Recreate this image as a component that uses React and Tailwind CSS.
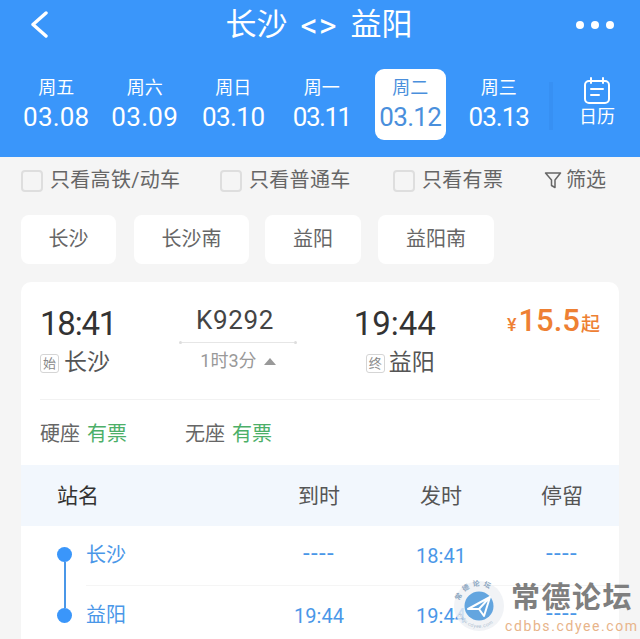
import React from "react";

const days = [
  ["周五", "03.08", false, "tracking-[0.2px]"],
  ["周六", "03.09", false, "tracking-[0.3px]"],
  ["周日", "03.10", false, "-tracking-[0.6px]"],
  ["周一", "03.11", false, "-tracking-[1.5px]"],
  ["周二", "03.12", true, "-tracking-[0.7px]"],
  ["周三", "03.13", false, "-tracking-[1px]"],
];

function Check({ label, className }) {
  return (
    <div className={`flex items-center gap-[7px] ${className}`}>
      <span className="w-[22px] h-[22px] rounded-[4px] border-2 border-[#dedede] bg-[#f5f5f5]" />
      <span className="text-[20px] leading-[24px] tracking-[0.3px] text-[#666666] -mt-[3px]">{label}</span>
    </div>
  );
}

function Chip({ w, label }) {
  return (
    <div className={`h-[49px] ${w} bg-white rounded-[8px] flex items-center justify-center pb-[2px] text-[20px] text-[#666666]`}>
      {label}
    </div>
  );
}

function Dash() {
  return <span className="text-[24px] leading-[24px] tracking-[1.4px] relative -top-[2px]">----</span>;
}

function Row({ name, arr, dep, stop, border }) {
  return (
    <div className={`flex items-center h-[60px] text-[#4a97e8] text-[20px] ${border ? "border-b border-[#f5f5f5]" : ""}`}>
      <div className="w-[183px] -mt-[2px]">{name}</div>
      <div className="w-[100px] text-center">{arr}</div>
      <div className="w-[100px] ml-[22px] text-center">{dep}</div>
      <div className="w-[100px] ml-[21px] text-center">{stop}</div>
    </div>
  );
}

export default function App() {
  return (
    <div className="relative w-[640px] h-[639px] overflow-hidden bg-[#f5f5f5] font-['Roboto','Noto_Sans_CJK_SC',sans-serif]">
      {/* blue header */}
      <div className="h-[157px] bg-[#3a96fa] text-white">
        <div className="h-[50px] flex items-center justify-between pl-[30px] pr-[26px]">
          <svg width="18" height="28" viewBox="0 0 18 28" fill="none" stroke="white" strokeWidth="3.4" strokeLinecap="round" strokeLinejoin="round">
            <path d="M16 2 L3 13.5 L16 25" />
          </svg>
          <div className="flex items-center gap-[13px] text-[31px] leading-[36px] ml-[14px]">
            <span>长沙</span>
            <span className="tracking-[1px] text-[34px]">&lt;&gt;</span>
            <span>益阳</span>
          </div>
          <div className="flex gap-[7px]">
            <span className="w-[8px] h-[8px] rounded-full bg-white" />
            <span className="w-[8px] h-[8px] rounded-full bg-white" />
            <span className="w-[8px] h-[8px] rounded-full bg-white" />
          </div>
        </div>
        <div className="flex items-start pl-[12px] pt-[19px]">
          {days.map(([d, n, active, track]) => (
            <div key={n} className="w-[88.5px] flex justify-center">
              <div className={`w-[71px] h-[71px] rounded-[9px] flex flex-col items-center pt-[7px] ${active ? "bg-white text-[#4a8fdc]" : ""}`}>
                <div className="text-[18px] leading-[24px]">{d}</div>
                <div className={`text-[26px] leading-[30px] mt-[2px] whitespace-nowrap ${track}`}>{n}</div>
              </div>
            </div>
          ))}
          <div className="w-[4px] h-[48px] mt-[13px] ml-[6px] bg-[#3790f3]" />
          <div className="flex flex-col items-center ml-[26px] pt-[8px]">
            <svg width="28" height="27" viewBox="0 0 28 27" fill="none" stroke="white" strokeWidth="2" strokeLinecap="round">
              <rect x="2" y="4" width="24" height="22" rx="4" />
              <path d="M8 1v5M20 1v5M8 12h12M8 18h8" />
            </svg>
            <div className="text-[18px] leading-[24px] mt-[1px]">日历</div>
          </div>
        </div>
      </div>

      {/* filters */}
      <div className="flex items-center h-[47px] pl-[21px] pt-[1px]">
        <Check label="只看高铁/动车" className="w-[199px]" />
        <Check label="只看普通车" className="w-[173px]" />
        <Check label="只看有票" className="w-[151px]" />
        <div className="flex items-center gap-[4px] text-[20px] text-[#666666] -mt-[3px]">
          <svg width="18" height="18" viewBox="0 0 18 18" fill="none" stroke="#666666" strokeWidth="1.5" strokeLinejoin="round">
            <path d="M1.5 2h15L11 9v7.5L7.5 14.5V9z" />
          </svg>
          <span>筛选</span>
        </div>
      </div>

      {/* chips */}
      <div className="flex mt-[11px] pl-[21px]">
        <Chip w="w-[95px]" label="长沙" />
        <Chip w="w-[115px] ml-[18px]" label="长沙南" />
        <Chip w="w-[96px] ml-[16px]" label="益阳" />
        <Chip w="w-[116px] ml-[17px]" label="益阳南" />
      </div>

      {/* card */}
      <div className="mt-[18px] mx-[21px] w-[598px] bg-white rounded-t-[10px]">
        <div className="mx-[19px] h-[118px] border-b border-[#f2f2f2] flex">
          <div className="w-[140px] pt-[22px]">
            <div className="text-[33px] leading-[40px] text-[#333333] whitespace-nowrap -tracking-[1.2px]">18:41</div>
            <div className="flex items-center gap-[5px] mt-[3px]">
              <span className="w-[19px] h-[19px] border border-[#d5d5d5] rounded-[3px] text-[13px] leading-[17px] text-center text-[#888888]">始</span>
              <span className="text-[23px] leading-[32px] text-[#555555]">长沙</span>
            </div>
          </div>
          <div className="w-[118px] pt-[20px] flex flex-col items-center">
            <div className="text-[26px] leading-[36px] text-[#444444] tracking-[0.6px] -ml-[6px]">K9292</div>
            <div className="w-full flex items-center mt-[3px]">
              <span className="w-[3px] h-[3px] rounded-full bg-[#dddddd]" />
              <span className="flex-1 h-[1px] bg-[#e6e6e6]" />
              <span className="w-[3px] h-[3px] rounded-full bg-[#dddddd]" />
            </div>
            <div className="flex items-center gap-[7px] mt-[5px] text-[18px] leading-[24px] text-[#999999]">
              <span>1时3分</span>
              <span className="w-0 h-0 border-x-[6px] border-x-transparent border-b-[7px] border-b-[#999999]" />
            </div>
          </div>
          <div className="w-[139px] ml-[58px] pt-[22px]">
            <div className="text-[33px] leading-[40px] text-[#333333] whitespace-nowrap -ml-[1px]">19:44</div>
            <div className="flex items-center gap-[4px] mt-[3px] ml-[11px]">
              <span className="w-[19px] h-[19px] border border-[#d5d5d5] rounded-[3px] text-[13px] leading-[17px] text-center text-[#888888]">终</span>
              <span className="text-[23px] leading-[32px] text-[#555555]">益阳</span>
            </div>
          </div>
          <div className="ml-[14px] pt-[20px] flex items-baseline text-[#ee8033] font-medium whitespace-nowrap">
            <span className="text-[18px] mr-[2px]">¥</span>
            <span className="text-[31px] leading-[38px]">15.5</span>
            <span className="text-[19px] ml-[1px]">起</span>
          </div>
        </div>

        <div className="h-[65px] pl-[19px] pt-[2px] flex items-center text-[20px] text-[#666666]">
          <span>硬座</span>
          <span className="ml-[7px] text-[#4caf68]">有票</span>
          <span className="ml-[58px]">无座</span>
          <span className="ml-[7px] text-[#4caf68]">有票</span>
        </div>

        <div className="h-[61px] bg-[#f2f7fd] flex items-center pt-[3px] text-[21px] text-[#555555]">
          <div className="w-[248px] pl-[36px] text-[#333333]">站名</div>
          <div className="w-[100px] text-center">到时</div>
          <div className="w-[100px] ml-[22px] text-center">发时</div>
          <div className="w-[100px] ml-[21px] text-center">停留</div>
        </div>

        <div className="flex pl-[36px]">
          <div className="w-[29px] flex flex-col items-start pt-[21px]">
            <span className="w-[15px] h-[15px] rounded-full bg-[#3a96fa]" />
            <span className="w-[2px] h-[46px] ml-[6.5px] bg-[#4a97e8]" />
            <span className="w-[15px] h-[15px] rounded-full bg-[#3a96fa]" />
          </div>
          <div className="flex-1">
            <Row name="长沙" arr={<Dash />} dep="18:41" stop={<Dash />} border />
            <Row name="益阳" arr="19:44" dep="19:44" stop={<Dash />} />
          </div>
        </div>
      </div>

      {/* watermark */}
      <div className="absolute left-[453px] top-[580px] flex pointer-events-none">
        <svg width="52" height="52" viewBox="0 0 52 52" className="opacity-80">
          <defs>
            <path id="ringTop" d="M6 26 A20 20 0 0 1 46 26" />
            <path id="ringBottom" d="M4 26 A22 22 0 0 0 48 26" />
          </defs>
          <circle cx="26" cy="26" r="25" fill="#eef1f5" />
          <text fontSize="7" fontWeight="700" fill="#6f8fb0" letterSpacing="3">
            <textPath href="#ringTop" startOffset="8%">常德论坛</textPath>
          </text>
          <text fontSize="5" fill="#9fb2c6" letterSpacing="0.4">
            <textPath href="#ringBottom" startOffset="12%">www.cdyee.com</textPath>
          </text>
          <circle cx="26" cy="26" r="14.5" fill="#3d8fd8" />
          <path d="M15 29 L37 17 L31 36 L26 29 Z M26 29 L37 17" fill="none" stroke="#ffffff" strokeWidth="2" strokeLinejoin="round" />
        </svg>
        <div className="ml-[6px] flex flex-col items-start -mt-[1px]">
          <div className="text-[29px] leading-[38px] font-bold text-[#7f7f7f] tracking-[1.5px] whitespace-nowrap">常德论坛</div>
          <div className="text-[14px] leading-[16px] -ml-[6px] mt-[1px] text-[#e8b48a] tracking-[1.6px] whitespace-nowrap">cdbbs.cdyee.com</div>
        </div>
      </div>
    </div>
  );
}
